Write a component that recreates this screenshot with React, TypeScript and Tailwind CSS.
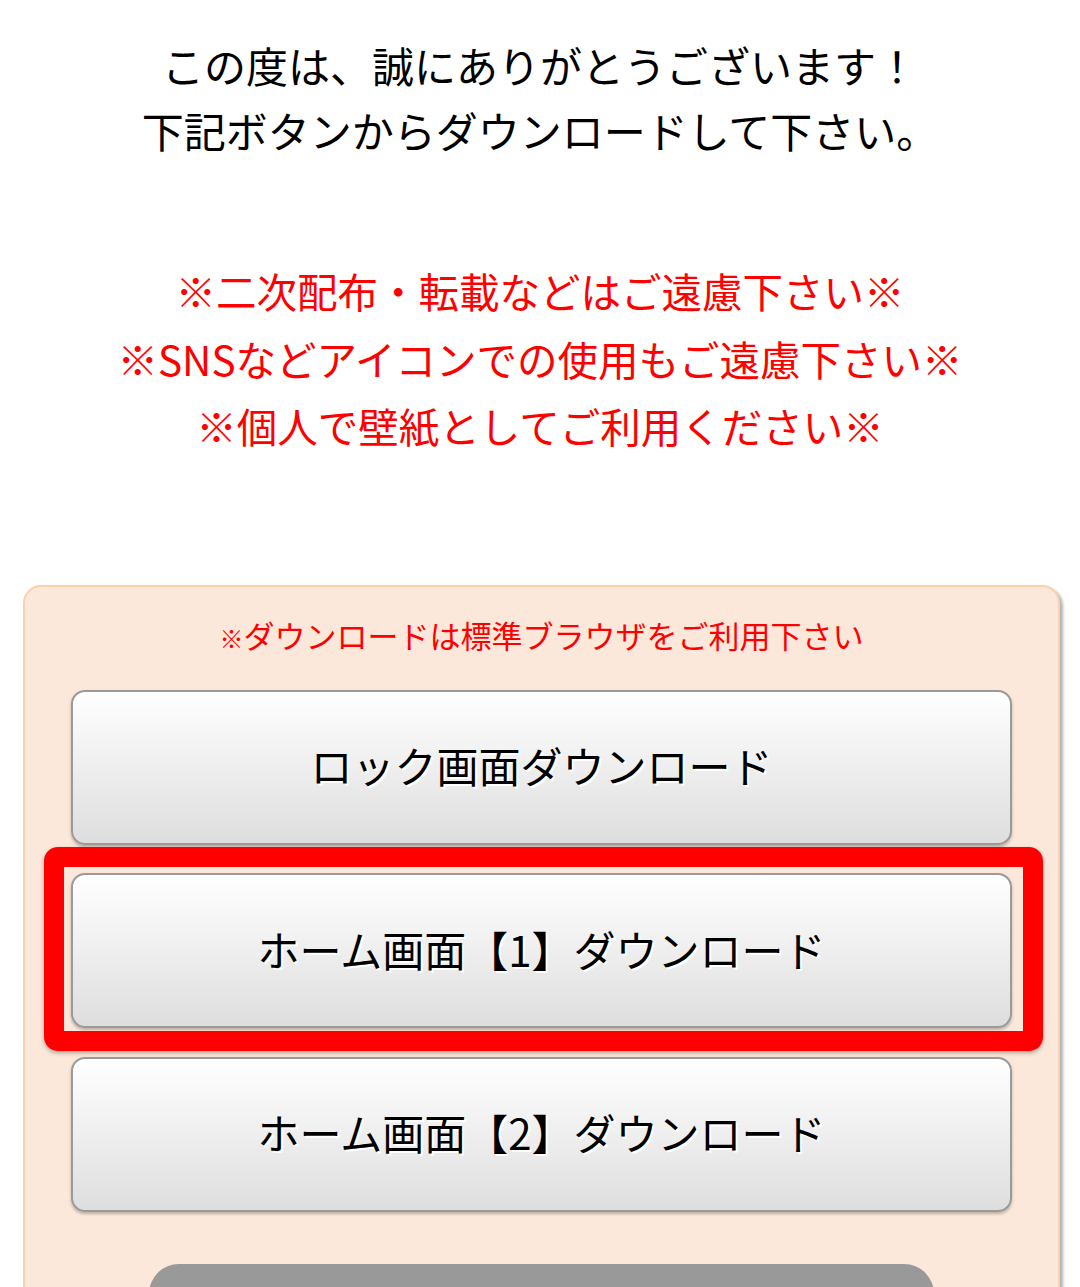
import React from "react";

const font = { fontFamily: '"Noto Sans CJK JP", "Noto Sans", sans-serif' };

function DlButton({ label }: { label: string }) {
  return (
    <div className="flex h-[155px] w-full items-center justify-center rounded-[14px] border-2 border-[#9a9a9a] bg-gradient-to-b from-[#ffffff] to-[#dedede] pb-[4px] shadow-[0_2px_3px_rgba(0,0,0,0.25)]">
      <span className="text-[42px] leading-none text-black [text-shadow:2px_2px_0_#ffffff]">{label}</span>
    </div>
  );
}

export default function App() {
  return (
    <div className="w-[1080px] h-[1287px] overflow-hidden bg-white" style={font}>
      <div className="pt-[32px] text-center text-[42px] leading-[65px] text-black">
        <p>この度は、誠にありがとうございます！</p>
        <p>下記ボタンからダウンロードして下さい。</p>
      </div>
      <div className="mt-[95px] text-center text-[40.5px] leading-[67.5px] text-[#ff0000]">
        <p>※二次配布・転載などはご遠慮下さい※</p>
        <p>※SNSなどアイコンでの使用もご遠慮下さい※</p>
        <p>※個人で壁紙としてご利用ください※</p>
      </div>
      <div className="ml-[23px] mt-[125px] h-[720px] w-[1037px] rounded-[18px] border-2 border-[#f9d2ad] bg-[#fce8da] px-[46px] pt-[26px] shadow-[3px_3px_3px_rgba(0,0,0,0.3)]">
        <p className="text-center text-[31px] leading-[44px] text-[#ff0000]">
          <span className="text-[24px]">※</span>ダウンロードは標準ブラウザをご利用下さい
        </p>
        <div className="mt-[30px] flex flex-col gap-[28.5px]">
          <DlButton label="ロック画面ダウンロード" />
          <div className="relative">
            <DlButton label="ホーム画面【1】ダウンロード" />
            <div className="pointer-events-none absolute -left-[27px] -top-[26px] -right-[31px] -bottom-[23px] rounded-[14px] border-[20px] border-[#ff0000] shadow-[0_2px_4px_rgba(0,0,0,0.3)]" />
          </div>
          <DlButton label="ホーム画面【2】ダウンロード" />
        </div>
        <div className="mx-auto mt-[52px] h-[80px] w-[785px] rounded-[30px] bg-[#999999]" />
      </div>
    </div>
  );
}
